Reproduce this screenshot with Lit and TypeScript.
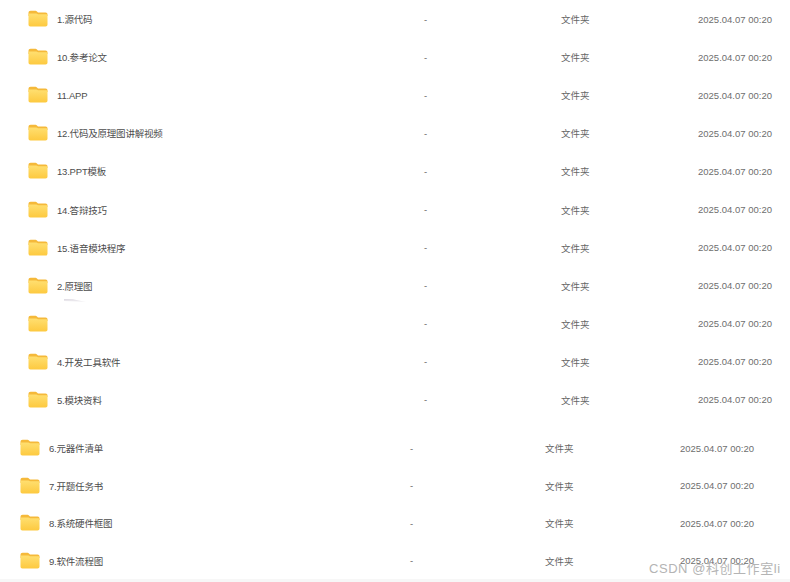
import { LitElement, html, css, svg } from "lit";
import { customElement } from "lit/decorators.js";

const top = ["1.源代码","10.参考论文","11.APP","12.代码及原理图讲解视频","13.PPT模板","14.答辩技巧","15.语音模块程序","2.原理图","","4.开发工具软件","5.模块资料"];
const bottom = ["6.元器件清单","7.开题任务书","8.系统硬件框图","9.软件流程图"];

const folder = svg`<svg class="ico" viewBox="0 0 20 17" width="20" height="17">
  <defs><linearGradient id="f" x1="0" y1="0" x2="0" y2="1"><stop offset="0" stop-color="#ffdf70"/><stop offset="1" stop-color="#fdc93f"/></linearGradient></defs>
  <path d="M0.5 3C0.5 1.5 1.3 0.7 2.6 0.7H7C8 0.7 8.5 1 9.2 1.7L10 2.5H17.5C18.8 2.5 19.5 3.3 19.5 4.5V6H0.5Z" fill="#f5b93a"/>
  <path d="M0.5 4.6C0.5 3.9 1 3.6 1.6 3.6L8.5 3.6L10 4.2H18C19 4.2 19.5 4.8 19.5 5.6V14.6C19.5 15.9 18.8 16.6 17.5 16.6H2.5C1.2 16.6 0.5 15.9 0.5 14.6Z" fill="url(#f)"/>
</svg>`;

@customElement("app-root")
export class AppRoot extends LitElement {
  static styles = css`
    :host { display: block; width: 790px; height: 582px; position: relative; overflow: hidden; background: #fff;
      font-family: "Liberation Sans", "Noto Sans CJK SC", sans-serif; font-size: 9.5px; color: #666; }
    .list { display: flex; flex-direction: column; }
    .a { height: 419px; margin-bottom: 10.5px; }
    .b { height: 150px; }
    .row { flex: 1 1 0; min-height: 0; display: grid; align-items: center; }
    .a .row { grid-template-columns: 28px 29px 367px 137px 137px 1fr; }
    .b .row { grid-template-columns: 20px 29px 361px 135px 135px 1fr; }
    .ico { display: block; grid-column: 2; margin-top: -1px; }
    .name { color: #4c4c4c; letter-spacing: -0.2px; }
    .date { color: #6e6e6e; white-space: nowrap; }
    .smear { position: absolute; left: 64px; top: 299px; width: 22px; height: 3px; background: linear-gradient(#dcd8e0, #f6f5f7);
      clip-path: polygon(0 0, 40% 10%, 100% 100%, 0 70%); }
    .mark { position: absolute; left: 649px; top: 561px; font-size: 13px; line-height: 16px; color: #b4b4b4; letter-spacing: 0.55px; white-space: nowrap; }
    .edge { position: absolute; left: 0; right: 0; bottom: 0; height: 3px; background: #f7f7f7; }
  `;
  private row(n: string) {
    return html`<div class="row">${folder}<span class="name">${n}</span><span>-</span><span>文件夹</span><span class="date">2025.04.07 00:20</span></div>`;
  }
  render() {
    return html`
      <div class="list a">${top.map((n) => this.row(n))}</div>
      <div class="list b">${bottom.map((n) => this.row(n))}</div>
      <div class="smear"></div>
      <div class="edge"></div>
      <div class="mark">CSDN @科创工作室li</div>`;
  }
}
